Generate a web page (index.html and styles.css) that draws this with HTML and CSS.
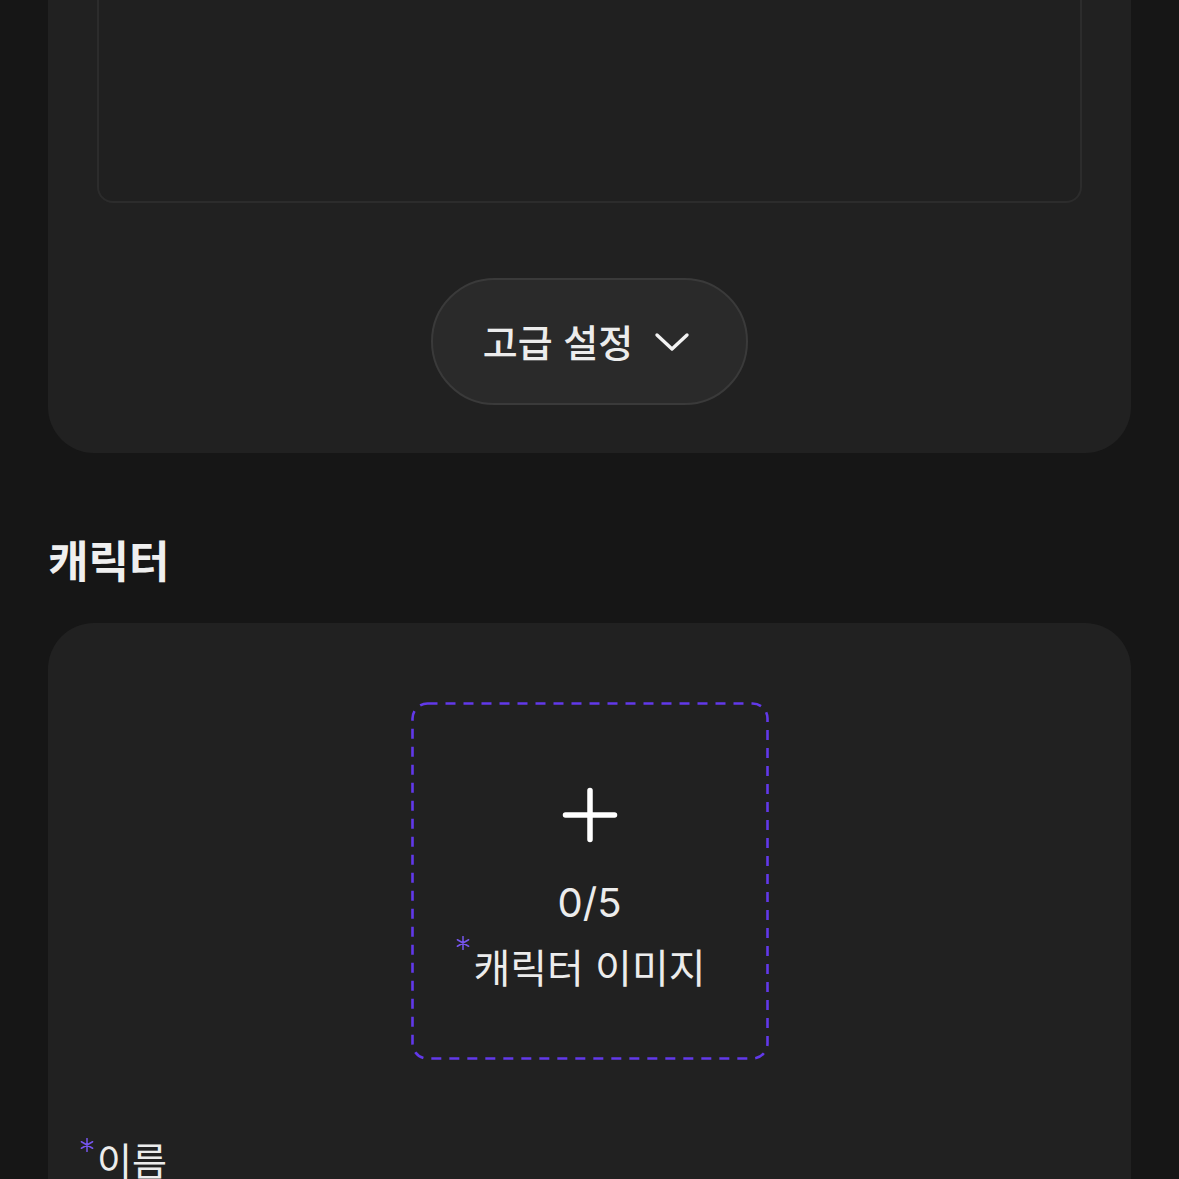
FILE: index.html
```html
<!DOCTYPE html>
<html lang="ko">
<head>
<meta charset="utf-8">
<link rel="stylesheet" href="styles.css">
</head>
<body>
<main class="page">
  <section class="card card-top">
    <div class="textarea"></div>
    <div class="adv-row">
      <button class="adv-btn" type="button">
        <span class="adv-label">고급 설정</span>
        <svg class="chev" width="40" height="40" viewBox="0 0 40 40"><path d="M5 12 L20 26 L35 12" fill="none" stroke="#f2f2f2" stroke-width="3.4" stroke-linecap="round" stroke-linejoin="round"/></svg>
      </button>
    </div>
  </section>

  <h2 class="section-title">캐릭터</h2>

  <section class="card card-char">
    <div class="upload">
      <svg class="dash" width="358" height="358" viewBox="0 0 358 358"><rect x="1.5" y="1.5" width="355" height="355" rx="15" ry="15" fill="none" stroke="#6239ea" stroke-width="2.6" stroke-dasharray="10 8"/></svg>
      <svg class="plus" width="56" height="56" viewBox="0 0 56 56"><path d="M28 3.5 V52.5 M3.5 28 H52.5" stroke="#ffffff" stroke-width="5.5" stroke-linecap="round"/></svg>
      <div class="count">0/5</div>
      <div class="req upload-label"><span class="star star-up"><svg width="14" height="14" viewBox="0 0 14 14"><path d="M7 0.5 V13.5 M1.4 3.75 L12.6 10.25 M1.4 10.25 L12.6 3.75" stroke="#7655ee" stroke-width="1.5" stroke-linecap="round"/></svg></span>캐릭터 이미지</div>
    </div>
    <div class="field">
      <label class="req field-label"><span class="star star-field"><svg width="14" height="14" viewBox="0 0 14 14"><path d="M7 0.5 V13.5 M1.4 3.75 L12.6 10.25 M1.4 10.25 L12.6 3.75" stroke="#7655ee" stroke-width="1.5" stroke-linecap="round"/></svg></span>이름</label>
    </div>
  </section>
</main>
</body>
</html>
```
FILE: styles.css
```css
* { box-sizing: border-box; }
html, body {
  margin: 0;
  padding: 0;
  background: #161616;
  height: 1179px;
  overflow: hidden;
}
body {
  font-family: "Noto Sans CJK KR", "Noto Sans", sans-serif;
  color: #ececec;
}
.page {
  padding: 0 48px;
  display: flex;
  flex-direction: column;
}
.card {
  background: #212121;
  border-radius: 46px;
  padding: 0 49px;
}
.card-top {
  margin-top: -200px;
  padding-top: 48px;
  padding-bottom: 48px;
}
.textarea {
  height: 355px;
  border: 2px solid #2c2c2c;
  border-radius: 16px;
  background: #202020;
}
.adv-row {
  display: flex;
  justify-content: center;
  margin-top: 75px;
}
.adv-btn {
  display: flex;
  align-items: center;
  gap: 19px;
  height: 127px;
  padding: 0 54px 0 50px;
  border-radius: 64px;
  background: #2a2a2a;
  border: 2px solid #3a3a3a;
  color: #ececec;
  font-family: inherit;
  font-size: 38px;
  font-weight: 500;
}
.adv-label { line-height: 1; margin-top: -2px; }
.chev { display: block; margin-top: 2px; }
.section-title {
  margin: 78px 0 36px;
  font-size: 44px;
  font-weight: 700;
  line-height: 56px;
  color: #efefef;
}
.card-char {
  padding-top: 79px;
  padding-bottom: 200px;
  display: flex;
  flex-direction: column;
}
.upload {
  position: relative;
  align-self: center;
  width: 358px;
  height: 358px;
  display: flex;
  flex-direction: column;
  align-items: center;
  padding-top: 85px;
}
.dash {
  position: absolute;
  inset: 0;
}
.plus { display: block; }
.count {
  margin-top: 36px;
  font-family: Inter, "Noto Sans", sans-serif;
  font-size: 40px;
  line-height: 48px;
  color: #ececec;
}
.req { position: relative; }
.star {
  position: absolute;
  right: 100%;
  display: block;
  line-height: 0;
}
.star-up { top: -8px; margin-right: 4px; }
.star-field { top: 2px; margin-right: 3px; }
.upload-label {
  margin-top: 14px;
  font-size: 40px;
  line-height: 50px;
}
.field { margin-top: 74px; }
.field-label {
  display: inline-block;
  font-size: 38px;
  line-height: 50px;
}
```
